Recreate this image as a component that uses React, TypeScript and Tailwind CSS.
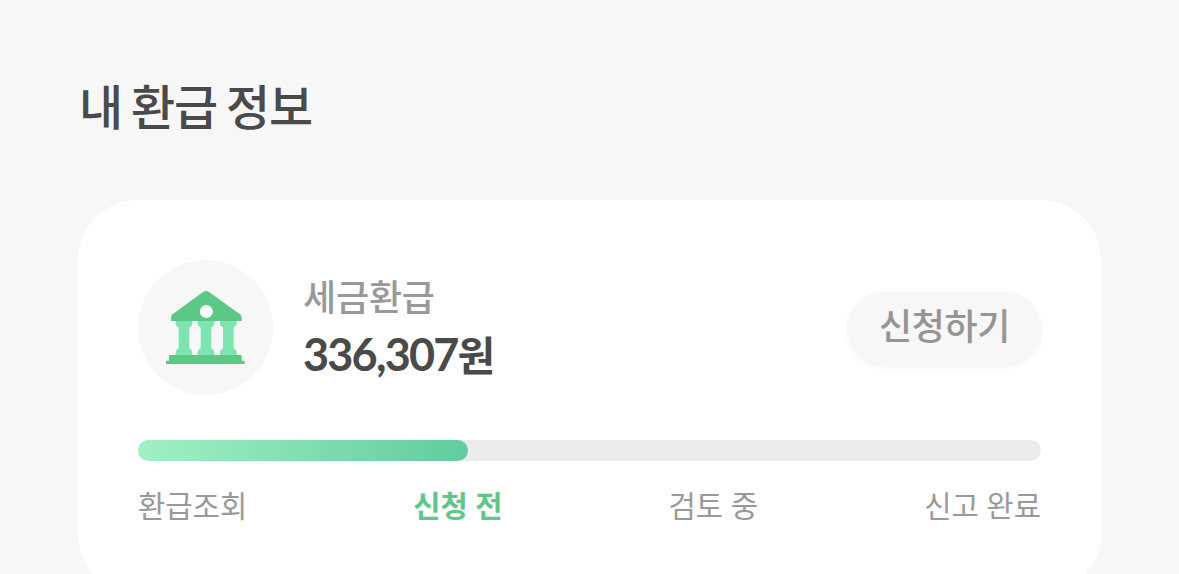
import React from "react";

interface Step {
  id: string;
  label: string;
}

const steps: Step[] = [
  { id: "lookup", label: "환급조회" },
  { id: "before", label: "신청 전" },
  { id: "review", label: "검토 중" },
  { id: "done", label: "신고 완료" },
];

function BankIcon() {
  return (
    <svg viewBox="24 30 405 405" className="w-full h-full" aria-hidden="true">
      {/* Columns */}
      <g fill="#7de3b0">
        {[162, 228, 295].map((x) => (
          <path
            key={x}
            transform={`translate(${x} 0)`}
            d="M-25 211H25V222Q24 229 19 230Q16 231 16 235V293Q16 297 20 298Q25 302 25 309V316H-25V309Q-25 302 -20 298Q-16 297 -16 293V235Q-16 231 -19 230Q-24 229 -25 222Z"
          />
        ))}
      </g>
      {/* Roof */}
      <path
        fill="#5cc886"
        d="M123 213V203Q123 197 128 193L219 126Q228 120 237 126L330 193Q335 197 335 203V213Z"
      />
      <circle cx="229" cy="184.500" r="19.500" fill="#fff" />
      {/* Base */}
      <path
        fill="#5cc886"
        d="M120 315H332Q335 315 335 318V332H342Q344 332 344 334V342H108V334Q108 332 110 332H117V318Q117 315 120 315Z"
      />
    </svg>
  );
}

export default function App() {
  const current = "before";
  const progress = 36.55;

  return (
    <main className="h-[574px] overflow-hidden bg-[#f7f7f7] px-[78px] pt-[71px] font-['Lato','Noto_Sans_CJK_KR',sans-serif]">
      <h1 className="h-[129px] pl-px text-[48px] leading-[71px] font-medium tracking-[-0.024em] [word-spacing:-2px] text-[#4a4a4a]">
        내 환급 정보
      </h1>

      <section className="h-[394px] rounded-[60px] bg-white px-[60px] pt-[60px]">
        <div className="flex items-center">
          <div className="h-[135px] w-[135px] rounded-full bg-[#f7f7f7]">
            <BankIcon />
          </div>
          <div className="ml-[30px] pb-[4px]">
            <p className="text-[36px] leading-[58px] font-medium tracking-[-0.005em] text-[#999]">세금환급</p>
            <p className="text-[45px] leading-[57px] font-bold tracking-[-0.04em] text-[#4a4a4a]">
              336,307<span className="text-[41px]">원</span>
            </p>
          </div>
          <button className="mt-[2px] ml-auto h-[73px] w-[193px] rounded-full bg-[#f7f7f7] pb-[5px] text-[36px] leading-none font-medium tracking-[-0.01em] text-[#959595] shadow-[0_2px_6px_rgba(0,0,0,0.05)]">
            신청하기
          </button>
        </div>

        <div className="mt-[45px] h-[21px] rounded-full bg-[#ececec]">
          <div
            className="h-full rounded-full bg-linear-to-r from-[#a0f0c4] to-[#60cc9f]"
            style={{ width: `${progress}%` }}
          />
        </div>

        <ul className="mt-[23px] flex justify-between text-[29.7px] leading-[44px] text-[#999]">
          {steps.map((step) => (
            <li key={step.id} className={step.id === current ? "font-bold text-[#62c58c]" : ""}>
              {step.label}
            </li>
          ))}
        </ul>
      </section>
    </main>
  );
}
